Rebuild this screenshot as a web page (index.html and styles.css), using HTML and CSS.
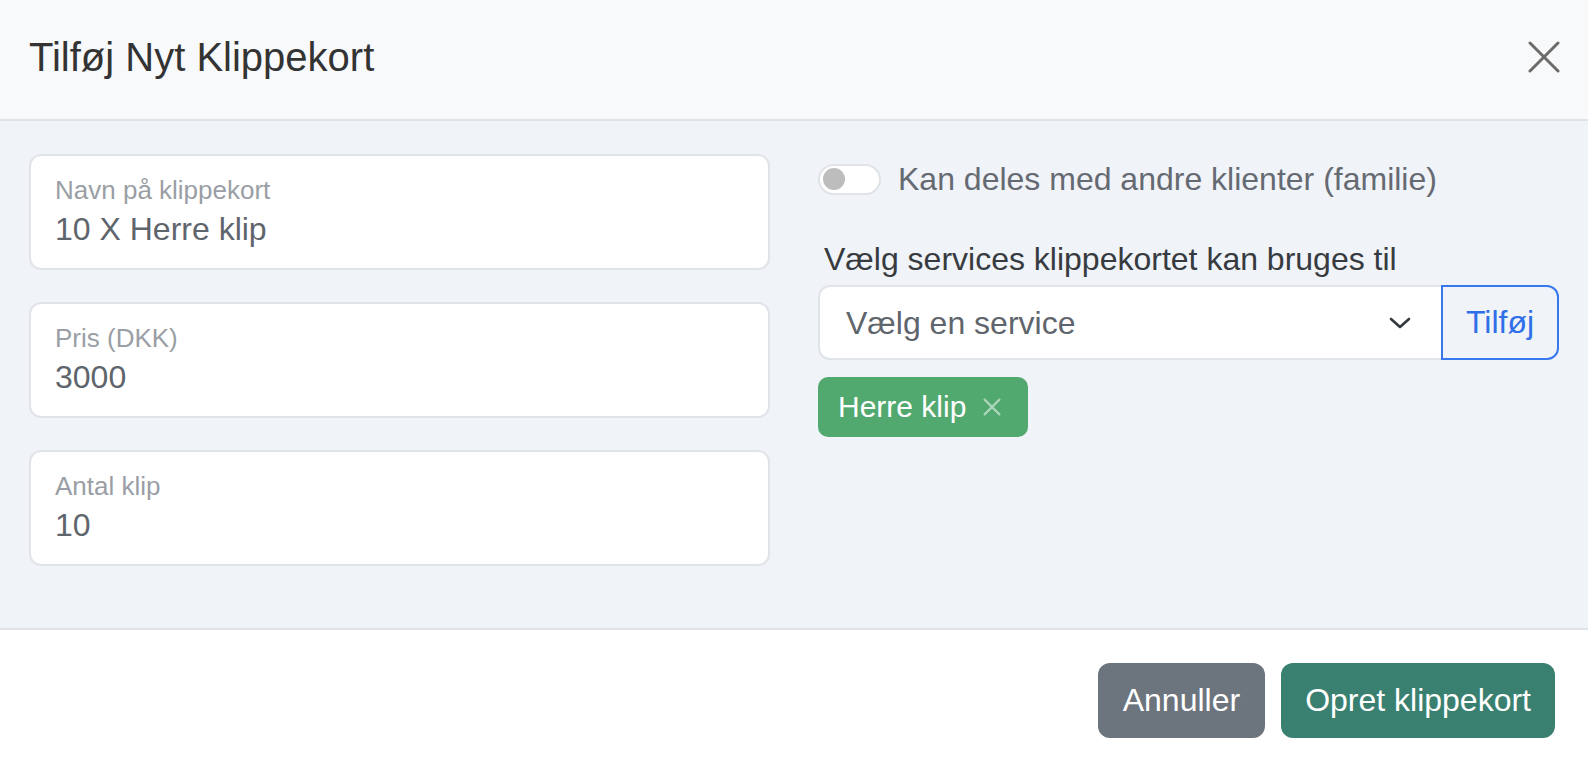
FILE: index.html
```html
<!DOCTYPE html>
<html lang="da">
<head>
    <meta charset="UTF-8">
    <meta name="viewport" content="width=device-width, initial-scale=1">
    <title>Tilføj Nyt Klippekort</title>
    <link rel="stylesheet" href="styles.css">
</head>
<body>
    <div class="modal">
        <!-- Header -->
        <div class="modal-header">
            <h5 class="modal-title">Tilføj Nyt Klippekort</h5>
            <button class="btn-close" aria-label="Luk">
                <svg width="32" height="32" viewBox="0 0 32 32">
                    <path d="M2 2 L30 30 M30 2 L2 30" stroke="#6b6b6b" stroke-width="3" stroke-linecap="round" fill="none"/>
                </svg>
            </button>
        </div>

        <!-- Body -->
        <div class="modal-body">
            <div class="col">
                <div class="form-floating">
                    <label>Navn på klippekort</label>
                    <div class="value">10 X Herre klip</div>
                </div>
                <div class="form-floating">
                    <label>Pris (DKK)</label>
                    <div class="value">3000</div>
                </div>
                <div class="form-floating">
                    <label>Antal klip</label>
                    <div class="value">10</div>
                </div>
            </div>

            <div class="col">
                <div class="switch-row">
                    <span class="switch"><span class="knob"></span></span>
                    <span class="switch-label">Kan deles med andre klienter (familie)</span>
                </div>

                <label class="form-label">Vælg services klippekortet kan bruges til</label>
                <div class="input-group">
                    <div class="select">
                        <span>Vælg en service</span>
                        <svg width="22" height="12" viewBox="0 0 22 12">
                            <path d="M2 2 L11 10 L20 2" stroke="#343a40" stroke-width="2.6" stroke-linecap="round" stroke-linejoin="round" fill="none"/>
                        </svg>
                    </div>
                    <button class="btn-outline">Tilføj</button>
                </div>

                <div class="tags">
                    <span class="tag">
                        Herre klip
                        <svg width="20" height="20" viewBox="0 0 20 20">
                            <path d="M2 2 L18 18 M18 2 L2 18" stroke="rgba(255,255,255,0.55)" stroke-width="2.2" fill="none"/>
                        </svg>
                    </span>
                </div>
            </div>
        </div>

        <!-- Footer -->
        <div class="modal-footer">
            <button class="btn btn-secondary">Annuller</button>
            <button class="btn btn-success">Opret klippekort</button>
        </div>
    </div>
</body>
</html>
```

FILE: styles.css
```css
body {
    margin: 0;
    padding: 0;
    width: 1588px;
    height: 766px;
    overflow: hidden;
    font-family: "Liberation Sans", Arial, Helvetica, sans-serif;
    background-color: #ffffff;
}

.modal {
    display: flex;
    flex-direction: column;
    height: 766px;
}

/* Header */
.modal-header {
    height: 121px;
    box-sizing: border-box;
    padding: 0 28px 5px 29px;
    display: flex;
    align-items: center;
    justify-content: space-between;
    background-color: #f8f9fb;
    border-bottom: 2px solid #dfe2e7;
}

.modal-title {
    margin: 0;
    font-size: 40px;
    line-height: 48px;
    font-weight: normal;
    color: #333333;
}

.btn-close {
    border: none;
    background: none;
    padding: 0;
    width: 32px;
    height: 32px;
    display: flex;
    cursor: pointer;
}

/* Body */
.modal-body {
    display: flex;
    gap: 48px;
    padding: 33px 29px 30px;
    background-color: #f0f3f8;
    border-bottom: 2px solid #dfe2e7;
}

.col {
    flex: 1;
    display: flex;
    flex-direction: column;
    align-items: flex-start;
}

.form-floating {
    width: 100%;
    height: 116px;
    box-sizing: border-box;
    margin-bottom: 32px;
    padding: 19px 24px 0;
    background-color: #ffffff;
    border: 2px solid #e0e3e8;
    border-radius: 12px;
    display: flex;
    flex-direction: column;
}

.form-floating label {
    font-size: 26px;
    line-height: 30px;
    color: #9a9ea5;
}

.form-floating .value {
    margin-top: 5px;
    font-size: 32px;
    line-height: 38px;
    color: #5f656c;
}

/* Switch */
.switch-row {
    margin-top: 6px;
    display: flex;
    align-items: center;
    gap: 17px;
}

.switch {
    width: 63px;
    height: 31px;
    box-sizing: border-box;
    border: 2px solid #e0e3e8;
    border-radius: 16px;
    background-color: #ffffff;
    display: flex;
    align-items: center;
    padding-left: 3px;
}

.knob {
    width: 22px;
    height: 22px;
    border-radius: 50%;
    background-color: #bdbdbd;
}

.switch-label {
    font-size: 32px;
    line-height: 38px;
    color: #656a72;
}

.form-label {
    margin-top: 42px;
    margin-bottom: 7px;
    padding-left: 6px;
    font-size: 32px;
    line-height: 38px;
    color: #373b40;
}

/* Select + button */
.input-group {
    width: 100%;
    display: flex;
    height: 75px;
}

.select {
    flex: 1;
    box-sizing: border-box;
    padding: 0 30px 0 26px;
    background-color: #ffffff;
    border: 2px solid #e0e3e8;
    border-right: none;
    border-radius: 12px 0 0 12px;
    display: flex;
    align-items: center;
    justify-content: space-between;
    font-size: 32px;
    line-height: 38px;
    color: #5f656c;
}

.btn-outline {
    width: 118px;
    box-sizing: border-box;
    padding: 0;
    border: 2px solid #3878ee;
    border-radius: 0 12px 12px 0;
    background-color: transparent;
    font-family: inherit;
    font-size: 32px;
    color: #2f6fe8;
    cursor: pointer;
}

/* Tags */
.tags {
    margin-top: 17px;
    display: flex;
    gap: 10px;
}

.tag {
    height: 60px;
    box-sizing: border-box;
    padding: 0 26px 0 20px;
    display: flex;
    align-items: center;
    gap: 16px;
    background-color: #52a970;
    border-radius: 10px;
    font-size: 30px;
    color: #ffffff;
}

/* Footer */
.modal-footer {
    flex: 1;
    display: flex;
    justify-content: flex-end;
    align-items: flex-start;
    gap: 16px;
    padding: 33px 33px 0;
    background-color: #ffffff;
}

.btn {
    height: 75px;
    padding: 0 24px;
    border: none;
    border-radius: 12px;
    font-family: inherit;
    font-size: 32px;
    color: #ffffff;
    cursor: pointer;
}

.btn-secondary {
    background-color: #6c757d;
    padding: 0 25px;
}

.btn-success {
    background-color: #3a8070;
}
```
